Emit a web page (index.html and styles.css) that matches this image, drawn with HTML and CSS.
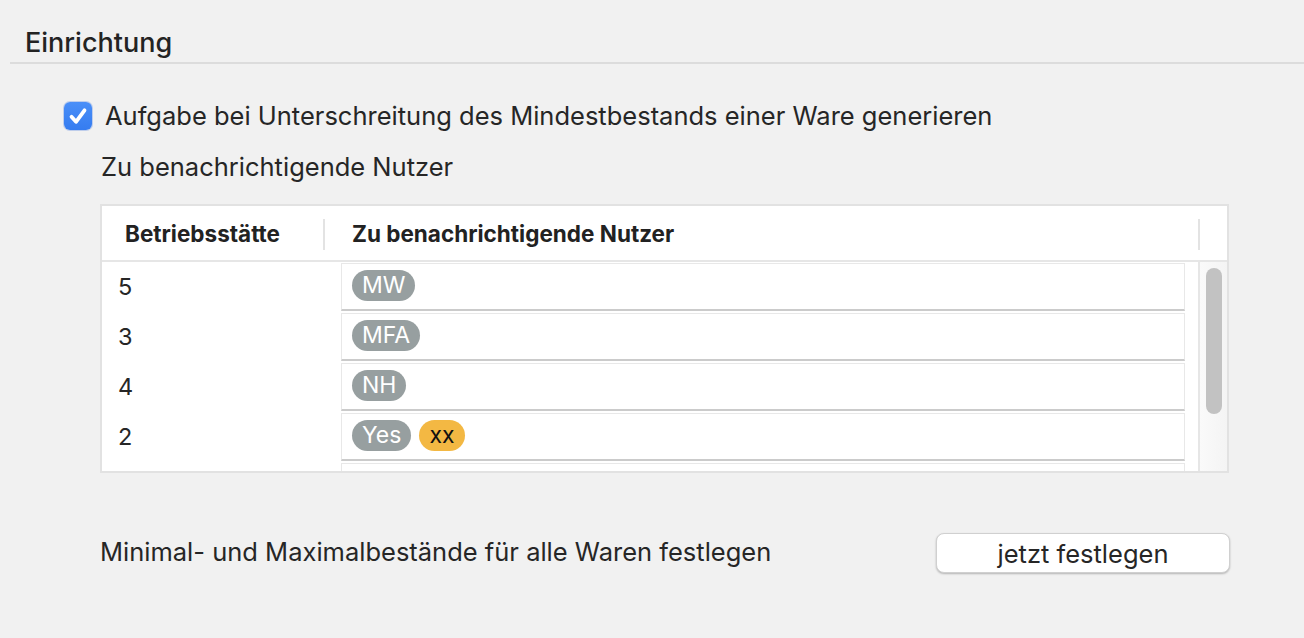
FILE: index.html
```html
<!DOCTYPE html>
<html lang="de">
<head>
<meta charset="utf-8">
<title>Einrichtung</title>
<link rel="stylesheet" href="styles.css">
</head>
<body>
<div class="page">
  <div class="title-bar"><h1 class="title">Einrichtung</h1></div>

  <label class="check-row">
    <span class="checkbox">
      <svg viewBox="0 0 28 28" width="28" height="28"><path d="M7.5 14.8 L12 19.8 L20.5 8.3" fill="none" stroke="#fff" stroke-width="3.8" stroke-linecap="round" stroke-linejoin="round"/></svg>
    </span>
    <span class="check-label">Aufgabe bei Unterschreitung des Mindestbestands einer Ware generieren</span>
  </label>

  <div class="content">
    <div class="sub-label">Zu benachrichtigende Nutzer</div>

    <div class="table">
      <div class="thead">
        <div class="th th-site">Betriebsstätte</div>
        <div class="th-divider"></div>
        <div class="th th-users">Zu benachrichtigende Nutzer</div>
        <div class="th-divider"></div>
        <div class="th-end"></div>
      </div>
      <div class="tbody">
        <div class="rows">
          <div class="row"><div class="site">5</div><div class="cell"><span class="tag">MW</span></div></div>
          <div class="row"><div class="site">3</div><div class="cell"><span class="tag">MFA</span></div></div>
          <div class="row"><div class="site">4</div><div class="cell"><span class="tag">NH</span></div></div>
          <div class="row"><div class="site">2</div><div class="cell"><span class="tag">Yes</span><span class="tag tag-yellow">xx</span></div></div>
          <div class="row"><div class="site"></div><div class="cell"></div></div>
        </div>
        <div class="scrollbar"><div class="thumb"></div></div>
      </div>
    </div>

    <div class="bottom-row">
      <span class="bottom-label">Minimal- und Maximalbestände für alle Waren festlegen</span>
      <button class="btn">jetzt festlegen</button>
    </div>
  </div>
</div>
</body>
</html>
```

FILE: styles.css
```css
* { box-sizing: border-box; }

html, body {
  margin: 0;
  padding: 0;
  background: #f1f1f1;
}

body {
  font-family: "Inter", "Liberation Sans", sans-serif;
  color: #262626;
  width: 1304px;
  height: 638px;
  overflow: hidden;
}

.title-bar {
  margin-left: 10px;
  height: 64px;
  border-bottom: 2px solid #dcdcdc;
  padding-top: 28px;
}

.title {
  margin: 0 0 0 15px;
  font-size: 27px;
  font-weight: 500;
  line-height: 30px;
  color: #232323;
}

.check-row {
  display: flex;
  align-items: center;
  gap: 13px;
  margin-top: 38px;
  padding-left: 64px;
  height: 28px;
}

.checkbox {
  width: 28px;
  height: 28px;
  border-radius: 6px;
  background: linear-gradient(#4a8ff8, #357cf0);
  box-shadow: 0 0 0 1px rgba(40, 100, 220, 0.25);
  display: flex;
}

.check-label {
  font-size: 25.5px;
  line-height: 28px;
}

.content {
  padding-left: 100px;
  padding-right: 75px;
}

.sub-label {
  margin-top: 22px;
  padding-left: 1px;
  font-size: 25.5px;
  line-height: 30px;
}

.table {
  margin-top: 22px;
  height: 269px;
  border: 2px solid #e2e2e2;
  background: #fff;
  display: flex;
  flex-direction: column;
}

.thead {
  height: 56px;
  flex: none;
  border-bottom: 2px solid #e6e6e6;
  display: flex;
  align-items: center;
  padding-top: 2px;
}

.th {
  font-size: 22.5px;
  font-weight: 700;
  line-height: 30px;
  color: #222;
  white-space: nowrap;
}

.th-site {
  width: 221px;
  padding-left: 23px;
}

.th-users {
  width: 873px;
  padding-left: 27px;
}

.th-divider {
  width: 2px;
  height: 31px;
  background: #e3e3e3;
  flex: none;
}

.th-end {
  flex: 1;
}

.tbody {
  flex: 1;
  display: flex;
  overflow: hidden;
}

.rows {
  width: 1096px;
  overflow: hidden;
}

.row {
  height: 50px;
  display: flex;
  align-items: center;
}

.site {
  width: 239px;
  padding-left: 16px;
  font-size: 23.5px;
  line-height: 30px;
}

.cell {
  width: 844px;
  height: 48px;
  border: 1px solid #e8e8e8;
  border-bottom: 2px solid #cbcbcb;
  padding: 6px 10px 0;
  display: flex;
  align-items: flex-start;
  gap: 8px;
}

.tag {
  height: 31px;
  padding: 0 10px;
  border-radius: 16px;
  background: #979fa0;
  color: #fff;
  font-size: 23px;
  line-height: 31px;
}

.tag-yellow {
  background: #f3b843;
  color: #111;
}

.scrollbar {
  flex: 1;
  border-left: 2px solid #e6e6e6;
  background: linear-gradient(90deg, #fafafa, #f4f4f4);
  padding: 6px 0 0 6px;
}

.thumb {
  width: 16px;
  height: 146px;
  border-radius: 8px;
  background: #c2c2c2;
}

.bottom-row {
  margin-top: 59px;
  display: flex;
  align-items: center;
  justify-content: space-between;
  height: 40px;
}

.bottom-label {
  font-size: 25.5px;
  line-height: 30px;
}

.btn {
  width: 294px;
  height: 40px;
  margin-right: -1px;
  margin-top: 2px;
  background: #fff;
  border: 1px solid #d0d0d0;
  border-radius: 8px;
  box-shadow: 0 1px 2px rgba(0, 0, 0, 0.25);
  font-family: "Inter", "Liberation Sans", sans-serif;
  font-size: 25.5px;
  color: #262626;
  padding: 0;
}
```
